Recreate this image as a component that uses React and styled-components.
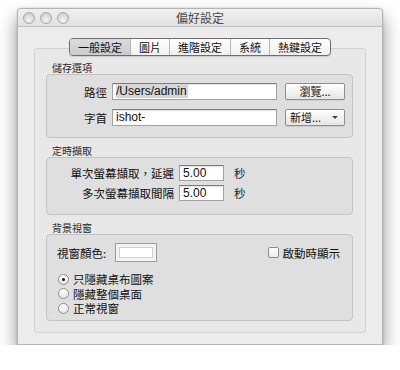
import React from "react";
import styled, { createGlobalStyle } from "styled-components";

const GlobalStyle = createGlobalStyle`
  html, body { margin: 0; padding: 0; background: #ffffff; }
  body {
    font-family: "Liberation Sans", "Noto Sans CJK TC", sans-serif;
    color: #1a1a1a;
  }
`;

const Window = styled.div`
  width: 366px;
  height: 337px;
  margin: 8px 0 0 17px;
  box-sizing: border-box;
  background: #ececec;
  border: 1px solid #b4b4b4;
  border-radius: 4px 4px 0 0;
  box-shadow: 0 10px 18px rgba(0, 0, 0, 0.45), 0 0 2px rgba(0, 0, 0, 0.2);
  display: flex;
  flex-direction: column;
`;

const TitleBar = styled.div`
  height: 17px;
  flex-shrink: 0;
  display: flex;
  align-items: center;
  padding-left: 5px;
  background: linear-gradient(#f0f0f0, #e1e1e1);
  border-bottom: 1px solid #c2c2c2;
  border-radius: 4px 4px 0 0;
`;

const Light = styled.span`
  width: 12px;
  height: 12px;
  border-radius: 50%;
  margin-right: 5px;
  background: radial-gradient(circle at 50% 70%, #f6f6f6, #d2d2d2 70%);
  border: 1px solid #a9a9a9;
  box-sizing: border-box;
`;

const Title = styled.div`
  flex: 1;
  text-align: center;
  margin-right: 56px;
  font-size: 12px;
  line-height: 14px;
  color: #4a4a4a;
  font-family: "Noto Sans CJK TC", sans-serif;
`;

const Content = styled.div`
  flex: 1;
  display: flex;
  flex-direction: column;
  padding: 11px 16px 16px;
`;

const Tabs = styled.div`
  align-self: center;
  display: flex;
  height: 16px;
  border: 1px solid #6e6e6e;
  border-radius: 4px;
  overflow: hidden;
  background: linear-gradient(#ffffff, #f1f1f1);
  position: relative;
  z-index: 1;
  box-shadow: 0 1px 1px rgba(0, 0, 0, 0.12);
`;

const Tab = styled.div`
  padding: 0 8px;
  font-size: 11px;
  line-height: 16px;
  font-family: "Noto Sans CJK TC", sans-serif;
  color: #111;
  border-left: ${(p) => (p.$first ? "none" : "1px solid #b5b5b5")};
  background: ${(p) =>
    p.$active ? "linear-gradient(#dcdcdc, #cbcbcb)" : "transparent"};
`;

const Panel = styled.div`
  flex: 1;
  margin-top: -8px;
  padding: 12px 12px 11px 11px;
  background: #e8e8e8;
  border: 1px solid #d2d2d2;
  border-radius: 3px;
  display: flex;
  flex-direction: column;
`;

const GroupLabel = styled.div`
  font-size: 10px;
  line-height: 13px;
  padding-left: 6px;
  color: #2a2a2a;
  font-family: "Noto Sans CJK TC", sans-serif;
  margin-top: ${(p) => (p.$first ? "0" : "6px")};
`;

const Group = styled.div`
  height: ${(p) => p.$h}px;
  box-sizing: border-box;
  background: #dfdfdf;
  border: 1px solid #c4c4c4;
  border-radius: 4px;
  padding: ${(p) => p.$pad};
  display: flex;
  flex-direction: column;
  gap: ${(p) => p.$gap || 0}px;
`;

const Row = styled.div`
  display: flex;
  align-items: center;
  height: ${(p) => p.$h || 17}px;
`;

const Label = styled.div`
  width: ${(p) => p.$w}px;
  text-align: right;
  margin-right: 5px;
  font-size: 11.5px;
  font-family: "Noto Sans CJK TC", sans-serif;
  color: #111;
`;

const Field = styled.div`
  width: ${(p) => p.$w}px;
  height: ${(p) => p.$h || 17}px;
  box-sizing: border-box;
  background: #fff;
  border: 1px solid #a2a2a2;
  border-top-color: #7d7d7d;
  box-shadow: inset 0 1px 1px rgba(0, 0, 0, 0.12);
  font-size: 12px;
  line-height: 15px;
  padding-left: 3px;
  color: #111;
  font-family: "Liberation Sans", "Noto Sans CJK TC", sans-serif;
  white-space: nowrap;
`;

const Selected = styled.span`
  background: #d6d6d6;
  padding-right: 1px;
`;

const Button = styled.div`
  width: 60px;
  height: 17px;
  margin-left: 8px;
  box-sizing: border-box;
  border: 1px solid #8e8e8e;
  border-radius: 2px;
  background: linear-gradient(#ffffff, #f2f2f2 50%, #e6e6e6);
  box-shadow: 0 1px 0 rgba(0, 0, 0, 0.08);
  font-size: 11px;
  line-height: 15px;
  font-family: "Noto Sans CJK TC", sans-serif;
  color: #111;
  display: flex;
  align-items: center;
  justify-content: ${(p) => (p.$popup ? "space-between" : "center")};
  padding: ${(p) => (p.$popup ? "0 6px 0 4px" : "0")};
`;

const Caret = styled.span`
  width: 0;
  height: 0;
  border-left: 3px solid transparent;
  border-right: 3px solid transparent;
  border-top: 3px solid #444;
`;

const Unit = styled.div`
  margin-left: 10px;
  font-size: 11.5px;
  font-family: "Noto Sans CJK TC", sans-serif;
`;

const Text = styled.span`
  font-size: 11.5px;
  font-family: "Noto Sans CJK TC", sans-serif;
  color: #111;
`;

const Well = styled.div`
  width: 42px;
  height: 19px;
  margin-left: 9px;
  box-sizing: border-box;
  border: 1px solid #9c9c9c;
  background: #f4f4f4;
  padding: 3px;
  &::after {
    content: "";
    display: block;
    height: 100%;
    background: #fff;
    border: 1px solid #d0d0d0;
    box-sizing: border-box;
  }
`;

const Spacer = styled.div`
  flex: 1;
`;

const Check = styled.span`
  width: 11px;
  height: 11px;
  box-sizing: border-box;
  border: 1px solid #8c8c8c;
  border-radius: 2px;
  background: linear-gradient(#ffffff, #e9e9e9);
  margin-right: 4px;
`;

const RadioList = styled.div`
  margin-top: 10px;
  display: flex;
  flex-direction: column;
`;

const Radio = styled.span`
  width: 11px;
  height: 11px;
  box-sizing: border-box;
  border: 1px solid #8c8c8c;
  border-radius: 50%;
  background: linear-gradient(#ffffff, #e6e6e6);
  margin: 0 4px 0 1px;
  display: flex;
  align-items: center;
  justify-content: center;
  &::after {
    content: "";
    width: 3px;
    height: 3px;
    border-radius: 50%;
    background: ${(p) => (p.$on ? "#111" : "transparent")};
  }
`;

const tabs = ["一般設定", "圖片", "進階設定", "系統", "熱鍵設定"];
const radios = ["只隱藏桌布圖案", "隱藏整個桌面", "正常視窗"];

export default function App() {
  return (
    <>
      <GlobalStyle />
      <Window>
        <TitleBar>
          <Light />
          <Light />
          <Light />
          <Title>偏好設定</Title>
        </TitleBar>
        <Content>
          <Tabs>
            {tabs.map((t, i) => (
              <Tab key={t} $first={i === 0} $active={i === 0}>
                {t}
              </Tab>
            ))}
          </Tabs>
          <Panel>
            <GroupLabel $first>儲存選項</GroupLabel>
            <Group $h={64} $pad="8px 0 0" $gap={9}>
              <Row>
                <Label $w={60}>路徑</Label>
                <Field $w={165}>
                  <Selected>/Users/admin</Selected>
                </Field>
                <Button>瀏覽...</Button>
              </Row>
              <Row>
                <Label $w={60}>字首</Label>
                <Field $w={165}>ishot-</Field>
                <Button $popup>
                  新增...
                  <Caret />
                </Button>
              </Row>
            </Group>

            <GroupLabel>定時擷取</GroupLabel>
            <Group $h={58} $pad="7px 0 0" $gap={4}>
              <Row $h={16}>
                <Label $w={127}>單次螢幕擷取，延遲</Label>
                <Field $w={45} $h={16}>5.00</Field>
                <Unit>秒</Unit>
              </Row>
              <Row $h={16}>
                <Label $w={127}>多次螢幕擷取間隔</Label>
                <Field $w={45} $h={16}>5.00</Field>
                <Unit>秒</Unit>
              </Row>
            </Group>

            <GroupLabel>背景視窗</GroupLabel>
            <Group $h={87} $pad="8px 12px 0 10px">
              <Row $h={19}>
                <Text>視窗顏色:</Text>
                <Well />
                <Spacer />
                <Check />
                <Text>啟動時顯示</Text>
              </Row>
              <RadioList>
                {radios.map((r, i) => (
                  <Row key={r} $h={14.5}>
                    <Radio $on={i === 0} />
                    <Text>{r}</Text>
                  </Row>
                ))}
              </RadioList>
            </Group>
          </Panel>
        </Content>
      </Window>
    </>
  );
}
